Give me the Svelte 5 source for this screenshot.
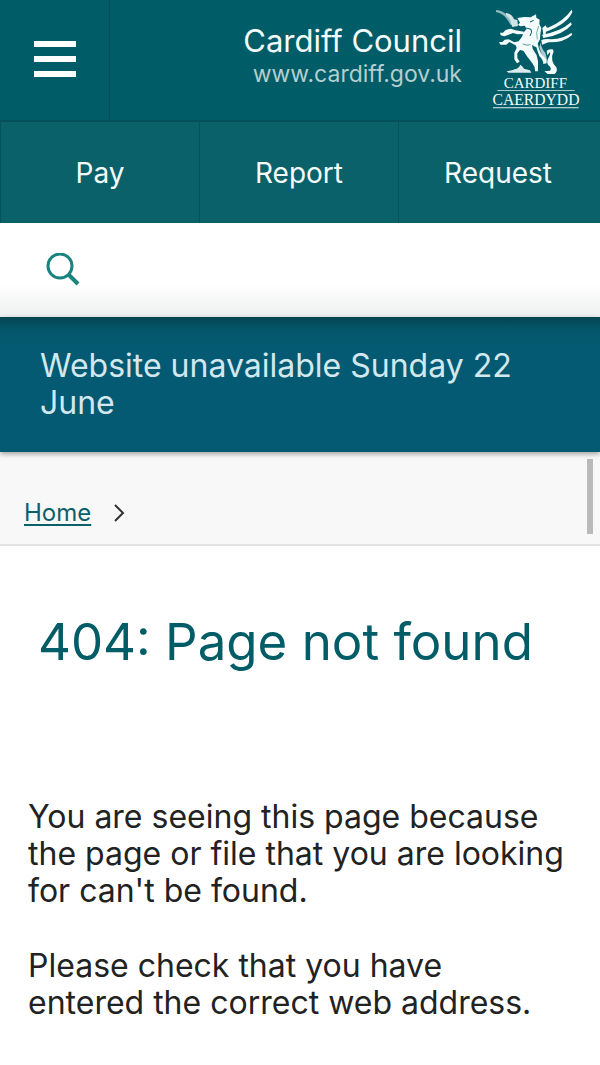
<script lang="ts">
  const quickLinks = ['Pay', 'Report', 'Request'];

  let query = $state('');
</script>

<div class="page">
  <header>
    <div class="masthead">
      <button class="menu-btn" aria-label="Open menu">
        <span class="bar"></span>
        <span class="bar"></span>
        <span class="bar"></span>
      </button>

      <a class="brand" href="/">
        <span class="brand-text">
          <span class="brand-name">Cardiff Council</span>
          <span class="brand-url">www.cardiff.gov.uk</span>
        </span>
        <svg class="logo" viewBox="30 24 276 306" fill="#f4fbfb" role="img" aria-label="Cardiff Caerdydd">
          <!-- Flame and tongue -->
          <path d="M48 30 Q70 32 82 46 Q90 56 98 74 L91 74 Q80 52 68 44 Q58 38 48 36 Z" opacity="0.6" />
          <path d="M78 38 Q96 42 102 58 L112 60 L114 78 L96 81 Q94 58 78 44 Z" opacity="0.85" />
          <!-- Head, neck and body -->
          <path d="M112 54 L133 51 L152 52 L168 43 L169 53 L179 59 L178 72 L184 84 L181 102 L180 118 Q172 128 172 142 Q162 140 156 134 L158 146 L170 166 L174 184 L174 214 L165 214 Q166 200 156 188 L142 170 L130 152 L120 150 L112 160 L112 174 L119 185 L111 190 L103 178 L103 158 L110 144 L107 136 L88 126 L79 134 L61 134 L57 126 L67 126 L74 119 L86 118 L103 127 L116 124 L126 110 L130 98 L140 87 L134 77 L121 79 L114 74 L120 68 Z" />
          <path d="M130 102 L112 103 L99 99 L86 104 L73 109 L62 106 L60 98 L69 98 L77 90 L92 86 L107 91 L132 95 Z" />
          <!-- Hind leg -->
          <path d="M174 132 Q176 152 188 166 Q202 178 200 190 L190 192 Q190 180 178 168 Q172 152 168 138 Z" />
          <path d="M182 128 Q184 146 196 158 Q200 172 202 186 L193 174 Q182 160 178 142 Z" opacity="0.7" />
          <!-- Wings -->
          <path d="M187 84 L197 76 Q198 84 204 83 Q250 64 275 29 L277 36 Q262 72 198 95 L196 106 L190 104 Z" />
          <path d="M186 104 Q240 96 273 67 L275 74 Q250 104 190 114 Z" />
          <path d="M184 120 Q196 116 214 118 Q252 116 275 98 L276 105 Q252 128 206 127 L186 134 Z" />
          <!-- Tail -->
          <path d="M200 152 Q206 146 218 148 L221 154 Q214 168 217 182 Q220 194 229 202 Q234 214 224 222 L203 222 L193 214 L210 212 Q216 208 208 198 Q198 190 204 176 Q212 164 210 156 L202 166 Z" />
          <!-- Ground -->
          <path d="M80 213 Q96 213 106 207 Q116 206 121 194 Q128 198 132 206 L150 211 L154 218 L85 218 Z" opacity="0.9" />
          <g stroke="#005c66" stroke-width="3" fill="none">
            <path d="M150 66 L161 61" />
            <path d="M139 84 L153 88 Q158 96 150 108" />
            <path d="M176 78 Q166 98 172 118" opacity="0.5" />
            <path d="M128 132 Q142 138 152 134" opacity="0.6" />
          </g>
          <text x="166" y="263" text-anchor="middle" font-size="45">CARDIFF</text>
          <rect x="52" y="270" width="232" height="3" opacity="0.7" />
          <text x="168" y="314" text-anchor="middle" font-size="47">CAERDYDD</text>
          <rect x="39" y="321" width="257" height="4" opacity="0.7" />
        </svg>
      </a>
    </div>

    <nav class="quick-links" aria-label="Quick links">
      {#each quickLinks as label}
        <a href="/{label.toLowerCase()}">{label}</a>
      {/each}
    </nav>
  </header>

  <form class="search" role="search">
    <button class="search-btn" aria-label="Search">
      <svg viewBox="0 0 34 34" fill="none" stroke="#198380" stroke-width="3">
        <circle cx="14" cy="13" r="12" />
        <path d="M23 22 L32 31" stroke-width="4" />
      </svg>
    </button>
    <input type="search" aria-label="Search the site" bind:value={query} />
  </form>

  <section class="notice">
    <a href="/notice">Website unavailable Sunday 22 June</a>
  </section>

  <nav class="breadcrumb" aria-label="Breadcrumb">
    <div class="crumbs">
      <a href="/">Home</a>
      <svg viewBox="0 0 12 18" fill="none" stroke="#333" stroke-width="2" aria-hidden="true">
        <path d="M2 1 L10 9 L2 17" />
      </svg>
    </div>
    <div class="scroll-thumb"></div>
  </nav>

  <main>
    <h1>404: Page not found</h1>
    <p>You are seeing this page because the page or file that you are looking for can't be found.</p>
    <p>Please check that you have entered the correct web address.</p>
  </main>
</div>

<style>
  :global(body) {
    margin: 0;
    background: #fff;
  }

  .page {
    font-family: Inter, 'Liberation Sans', sans-serif;
    color: #222;
  }

  a {
    text-decoration: none;
  }

  .masthead {
    display: flex;
    min-height: 120px;
    background: #005c66;
    border-bottom: 2px solid #03505a;
  }

  .menu-btn {
    display: flex;
    flex-direction: column;
    justify-content: center;
    align-items: center;
    gap: 9px;
    width: 110px;
    padding: 0 0 2px;
    background: none;
    border: none;
    border-right: 1px solid #034e58;
    cursor: pointer;
  }

  .bar {
    width: 42px;
    height: 6px;
    background: #fff;
  }

  .brand {
    flex: 1;
    display: flex;
    justify-content: flex-end;
    align-items: flex-start;
    gap: 28px;
    padding: 8px 18px 0 0;
  }

  .brand-text {
    display: flex;
    flex-direction: column;
    align-items: flex-end;
    padding-top: 13px;
  }

  .brand-name {
    font-size: 31px;
    line-height: 40px;
    color: #f4fbfb;
  }

  .brand-url {
    font-size: 23px;
    line-height: 27px;
    color: #b4ced1;
  }

  .logo {
    width: 92px;
    height: 102px;
    font-family: 'Liberation Serif', serif;
  }

  .quick-links {
    display: flex;
    background: #0b616a;
  }

  .quick-links a {
    width: 33%;
    border-left: 1px solid #07535d;
    padding: 33px 0 32px;
    font-size: 28px;
    line-height: 36px;
    text-align: center;
    color: #f4fbfb;
  }

  .search {
    display: flex;
    align-items: center;
    height: 94px;
    padding: 0 24px 0 46px;
    box-sizing: border-box;
    background: linear-gradient(#fff 65%, #eeeff0);
  }

  .search-btn {
    display: flex;
    padding: 0;
    background: none;
    border: none;
    cursor: pointer;
  }

  .search-btn svg {
    width: 34px;
    height: 34px;
  }

  .search input {
    flex: 1;
    min-width: 0;
    margin-left: 16px;
    border: none;
    outline: none;
    background: none;
    font: inherit;
    font-size: 28px;
  }

  .notice {
    position: relative;
    padding: 30px 40px 31px;
    background: linear-gradient(#04444f, #05566b 12px, #045a72 30px);
    box-shadow: 0 2px 5px rgba(0, 0, 0, 0.35);
  }

  .notice a {
    display: block;
    font-size: 32px;
    line-height: 37px;
    color: #d3e8ee;
  }

  .breadcrumb {
    display: flex;
    justify-content: space-between;
    padding: 7px 7px 10px 24px;
    background: #f8f8f8;
    border-bottom: 2px solid #e2e2e2;
  }

  .crumbs {
    display: flex;
    align-items: center;
    gap: 22px;
    padding-top: 32px;
  }

  .crumbs a {
    font-size: 24px;
    line-height: 30px;
    color: #0b616a;
    text-decoration: underline;
    text-underline-offset: 3px;
  }

  .crumbs svg {
    width: 12px;
    height: 18px;
  }

  .scroll-thumb {
    width: 6px;
    height: 75px;
    background: #bababa;
  }

  main {
    padding: 64px 34px 40px 28px;
  }

  h1 {
    margin: 0 10px 124px;
    font-size: 51px;
    font-weight: 400;
    line-height: 64px;
    color: #005c66;
  }

  p {
    margin: 0 0 38px;
    font-size: 32px;
    line-height: 37px;
  }
</style>
